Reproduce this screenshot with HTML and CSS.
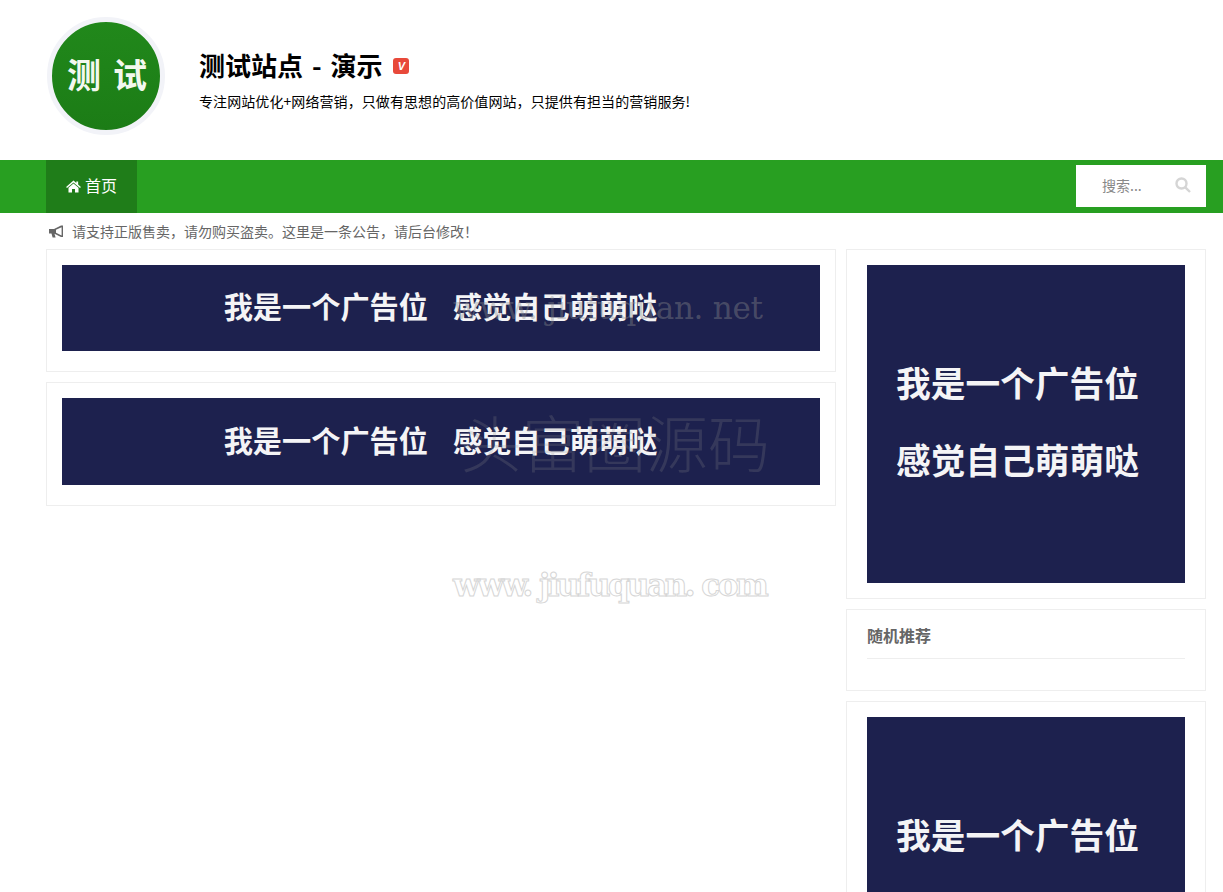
FILE: index.html
```html
<!DOCTYPE html>
<html lang="zh-CN">
<head>
  <meta charset="UTF-8">
  <meta name="viewport" content="width=device-width, initial-scale=1.0">
  <title>测试站点 - 演示</title>
  <link rel="stylesheet" href="styles.css">
</head>
<body>
  <header class="site-header">
    <div class="container header-inner">
      <div class="logo"><span>测试</span></div>
      <div class="brand">
        <h1>测试站点 - 演示 <span class="badge">V</span></h1>
        <p>专注网站优化+网络营销，只做有思想的高价值网站，只提供有担当的营销服务!</p>
      </div>
    </div>
  </header>

  <nav class="navbar">
    <div class="container nav-inner">
      <a class="nav-item" href="#">
        <svg class="home-icon" viewBox="0 0 16 14"><path d="M8 0.6 L11 3.2 V1.6 H13 V4.9 L16 7.5 L15 8.6 L8 2.6 L1 8.6 L0 7.5 Z M2.6 8.4 L8 3.8 L13.4 8.4 V13.4 H9.6 V9.6 H6.4 V13.4 H2.6 Z"/></svg>
        首页
      </a>
      <div class="search">
        <span>搜索...</span>
        <svg class="search-icon" viewBox="0 0 16 16"><circle cx="6.5" cy="6.5" r="5" /><path d="M10.3 10.3 L15 15" /></svg>
      </div>
    </div>
  </nav>

  <div class="container notice">
    <svg class="horn-icon" viewBox="0 0 15 13"><path fill-rule="evenodd" d="M0 4 H5 L12 0.5 H14 V12 H12 L5.5 8.8 L6.6 12.6 H3.6 L2.5 8.6 H0 Z M12.6 2.2 L7 4.8 V7.8 L12.6 10.4 Z"/></svg>
    请支持正版售卖，请勿购买盗卖。这里是一条公告，请后台修改！
  </div>

  <main class="container columns">
    <div class="col-main">
      <section class="card">
        <div class="ad ad-wide"><span>我是一个广告位</span><span>感觉自己萌萌哒</span></div>
      </section>
      <section class="card">
        <div class="ad ad-wide ad-tall"><span>我是一个广告位</span><span>感觉自己萌萌哒</span></div>
      </section>
    </div>
    <aside class="col-side">
      <section class="card card-side">
        <div class="ad ad-square"><span>我是一个广告位</span><span>感觉自己萌萌哒</span></div>
      </section>
      <section class="card card-side card-list">
        <h3>随机推荐</h3>
      </section>
      <section class="card card-side">
        <div class="ad ad-square"><span>我是一个广告位</span><span>感觉自己萌萌哒</span></div>
      </section>
    </aside>
  </main>

  <div class="mark mark-one">www. jiufuquan. net</div>
  <div class="mark mark-two">头富圈源码</div>
  <div class="mark mark-three">www. jiufuquan. com</div>
</body>
</html>
```

FILE: styles.css
```css
* {
  box-sizing: border-box;
  margin: 0;
  padding: 0;
}

html, body {
  height: 892px;
  overflow: hidden;
}

body {
  position: relative;
  background: #fff;
  color: #666;
  font-family: "Noto Sans CJK SC", "Liberation Sans", sans-serif;
  font-size: 14px;
}

.container {
  width: 1160px;
  margin-left: 46px;
}

.site-header {
  height: 160px;
}

.header-inner {
  display: flex;
  align-items: flex-start;
}

.logo {
  display: flex;
  align-items: center;
  justify-content: center;
  width: 118px;
  height: 118px;
  margin: 17px 0 0 1px;
  padding-bottom: 5px;
  border: 5px solid #f2f3f8;
  border-radius: 50%;
  background: linear-gradient(180deg, #21881b 0%, #1c7c16 100%);
  color: #f3f8ef;
  font-size: 34px;
  font-weight: 700;
  letter-spacing: 12px;
}

.logo span {
  margin-left: 14px;
}

.brand {
  margin: 47px 0 0 34px;
  color: #000;
}

.brand h1 {
  display: flex;
  align-items: center;
  gap: 11px;
  height: 36px;
  font-size: 26px;
  font-weight: 700;
  line-height: 36px;
  word-spacing: 3px;
}

.badge {
  width: 16px;
  height: 16px;
  margin-top: 2px;
  border-radius: 3px;
  background: #e8493a;
  color: #fff;
  font-family: "Liberation Sans", sans-serif;
  font-size: 11px;
  font-style: italic;
  line-height: 16px;
  text-align: center;
}

.brand p {
  margin-top: 8px;
  font-size: 14px;
  line-height: 20px;
  letter-spacing: 0.08px;
}

.navbar {
  height: 53px;
  background: #289f21;
}

.nav-inner {
  display: flex;
  justify-content: space-between;
}

.nav-item {
  display: flex;
  align-items: center;
  gap: 4px;
  width: 91px;
  height: 53px;
  padding: 0 0 3px 20px;
  background: #1f7d19;
  color: #fff;
  font-size: 16px;
  text-decoration: none;
}

.home-icon {
  width: 15px;
  height: 13px;
  margin-top: 2px;
  fill: #fff;
}

.search {
  display: flex;
  align-items: center;
  justify-content: space-between;
  width: 130px;
  height: 42px;
  margin-top: 5px;
  padding: 0 15px 3px 26px;
  background: #fff;
  color: #888;
  font-size: 14px;
}

.search-icon {
  width: 16px;
  height: 16px;
  fill: none;
  stroke: #d5d5d5;
  stroke-width: 2.4;
}

.notice {
  display: flex;
  align-items: center;
  gap: 8px;
  height: 36px;
  padding-left: 3px;
  font-size: 14px;
}

.horn-icon {
  width: 15px;
  height: 13px;
  fill: #666;
}

.columns {
  display: flex;
  gap: 10px;
}

.col-main {
  width: 790px;
}

.col-side {
  width: 360px;
}

.card {
  margin-bottom: 10px;
  padding: 15px 15px 20px;
  border: 1px solid #eee;
  background: #fff;
}

.card-side {
  padding: 15px 20px;
}

.card-list {
  height: 82px;
}

.card-list h3 {
  height: 34px;
  border-bottom: 1px solid #eee;
  color: #666;
  font-size: 16px;
  font-weight: 700;
  line-height: 20px;
}

.ad {
  display: flex;
  align-items: center;
  justify-content: center;
  background: #1d214e;
  color: #f4f4f6;
  font-weight: 700;
}

.ad-wide {
  gap: 25px;
  height: 86px;
  padding: 0 1px 6px 0;
  font-size: 29.2px;
}

.ad-tall {
  height: 87px;
}

.ad-square {
  flex-direction: column;
  gap: 27px;
  height: 318px;
  padding: 0 17px 8px 0;
  font-size: 34.7px;
  line-height: 50px;
}

/* watermarks stamped over the page */
.mark {
  position: absolute;
  white-space: nowrap;
  pointer-events: none;
}

.mark-one,
.mark-three {
  left: 453px;
  font-family: "DejaVu Serif", serif;
  font-size: 31px;
  line-height: 40px;
}

.mark-one {
  top: 288px;
  color: rgba(140, 140, 140, 0.4);
  letter-spacing: -0.3px;
}

.mark-two {
  left: 460px;
  top: 406px;
  color: rgba(140, 140, 140, 0.22);
  font-size: 62px;
  font-weight: 300;
  line-height: 70px;
}

.mark-three {
  top: 565px;
  color: #fff;
  font-weight: 700;
  letter-spacing: -2.5px;
  -webkit-text-stroke: 1px #d6d6d6;
}
```
